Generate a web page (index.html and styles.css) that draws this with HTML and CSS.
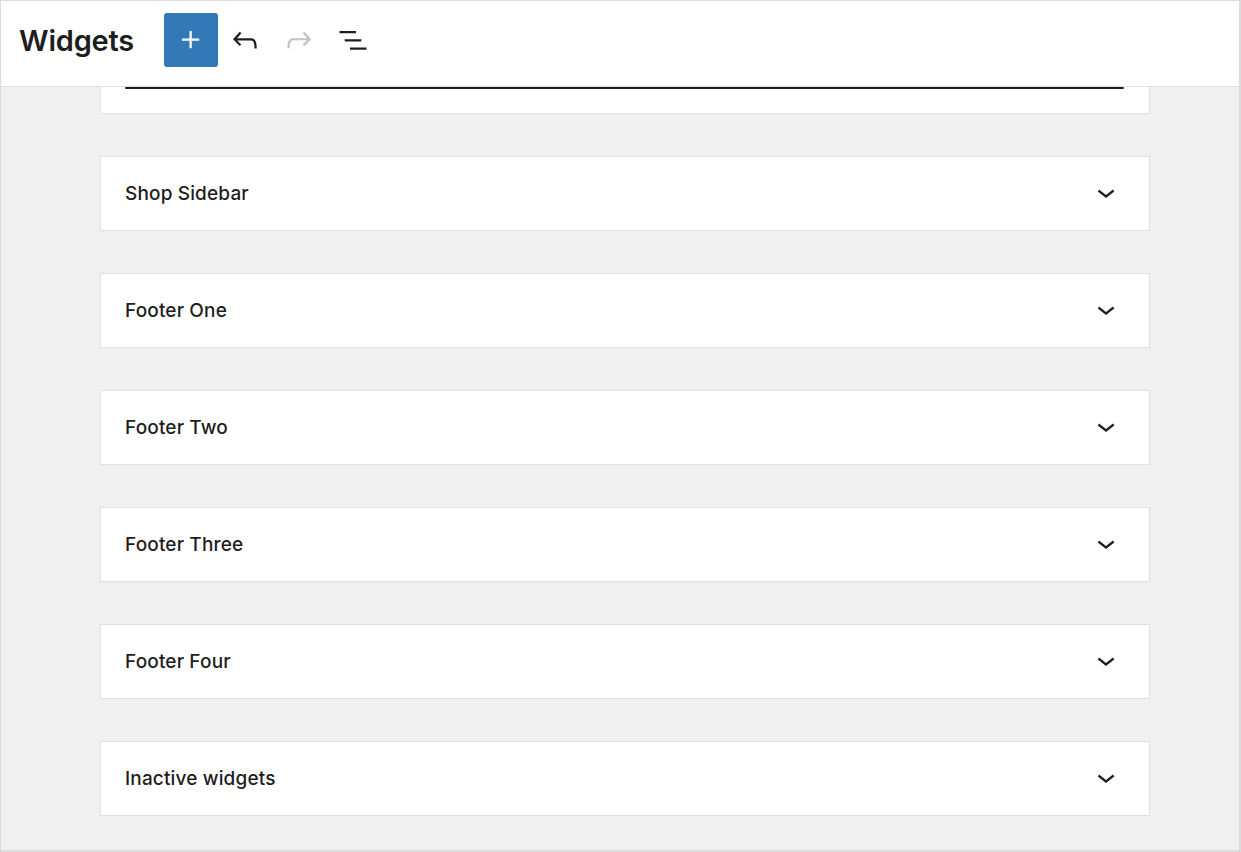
FILE: index.html
```html
<!DOCTYPE html>
<html lang="en">
<head>
<meta charset="utf-8">
<title>Widgets</title>
<link rel="stylesheet" href="styles.css">
</head>
<body>
<div class="frame">
  <header class="header">
    <h1 class="title">Widgets</h1>
    <div class="toolbar">
      <button class="tool tool-add" aria-label="Add block">
        <svg viewBox="0 0 24 24" width="36" height="36"><path d="M11 12.5V17.5H12.5V12.5H17.5V11H12.5V6H11V11H6V12.5H11Z"/></svg>
      </button>
      <button class="tool" aria-label="Undo">
        <svg viewBox="0 0 24 24" width="36" height="36"><path d="M18.3 11.7c-.6-.6-1.4-.9-2.3-.9H6.7l2.9-3.3-1.1-1-4.5 5L8.5 16l1-1-2.7-2.7H16c.5 0 .9.2 1.3.5 1 1 1 3.4 1 4.5v.3h1.5v-.2c0-1.5 0-4.3-1.5-5.7z"/></svg>
      </button>
      <button class="tool tool-disabled" aria-label="Redo">
        <svg viewBox="0 0 24 24" width="36" height="36"><path d="M15.6 6.5l-1.1 1 2.9 3.3H8c-.9 0-1.7.3-2.3.9-1.4 1.5-1.4 4.2-1.4 5.6v.2h1.5v-.3c0-1.1 0-3.5 1-4.5.3-.3.7-.5 1.3-.5h9.2L14.5 15l1.1 1.1 4.6-4.6-4.6-5z"/></svg>
      </button>
      <button class="tool" aria-label="List view">
        <svg viewBox="0 0 24 24" width="36" height="36"><path d="M3 6h11v1.5H3V6Zm3.5 5.5h11V13h-11v-1.5ZM21 17H10v1.5h11V17Z"/></svg>
      </button>
    </div>
  </header>
  <main class="main">
    <div class="area area-partial">
      <div class="partial-line"></div>
    </div>
    <div class="area"><span class="area-title">Shop Sidebar</span><svg class="chev" viewBox="0 0 24 24" width="36" height="36"><path d="M17.5 11.6L12 16l-5.5-4.4.9-1.2L12 14l4.6-3.6 1 1.2z"/></svg></div>
    <div class="area"><span class="area-title">Footer One</span><svg class="chev" viewBox="0 0 24 24" width="36" height="36"><path d="M17.5 11.6L12 16l-5.5-4.4.9-1.2L12 14l4.6-3.6 1 1.2z"/></svg></div>
    <div class="area"><span class="area-title">Footer Two</span><svg class="chev" viewBox="0 0 24 24" width="36" height="36"><path d="M17.5 11.6L12 16l-5.5-4.4.9-1.2L12 14l4.6-3.6 1 1.2z"/></svg></div>
    <div class="area"><span class="area-title">Footer Three</span><svg class="chev" viewBox="0 0 24 24" width="36" height="36"><path d="M17.5 11.6L12 16l-5.5-4.4.9-1.2L12 14l4.6-3.6 1 1.2z"/></svg></div>
    <div class="area"><span class="area-title">Footer Four</span><svg class="chev" viewBox="0 0 24 24" width="36" height="36"><path d="M17.5 11.6L12 16l-5.5-4.4.9-1.2L12 14l4.6-3.6 1 1.2z"/></svg></div>
    <div class="area"><span class="area-title">Inactive widgets</span><svg class="chev" viewBox="0 0 24 24" width="36" height="36"><path d="M17.5 11.6L12 16l-5.5-4.4.9-1.2L12 14l4.6-3.6 1 1.2z"/></svg></div>
  </main>
</div>
</body>
</html>
```

FILE: styles.css
```css
* { box-sizing: border-box; }
html, body { margin: 0; padding: 0; }
body {
  font-family: Inter, "Noto Sans", "Liberation Sans", sans-serif;
  color: #1e1e1e;
  background: #ffffff;
}
.frame {
  width: 1241px;
  height: 852px;
  border: 1px solid #dcdcdc;
  border-right-width: 2px;
  border-bottom-width: 2px;
  display: flex;
  flex-direction: column;
  overflow: hidden;
}
.header {
  height: 86px;
  flex: 0 0 86px;
  background: #fff;
  border-bottom: 1px solid #e0e0e0;
  display: flex;
  align-items: flex-start;
  padding: 12px 0 0 18px;
}
.title {
  margin: 13px 30px 0 0;
  font-size: 29px;
  font-weight: 600;
  letter-spacing: -0.2px;
  line-height: 1;
}
.toolbar {
  display: flex;
  align-items: center;
}
.tool {
  width: 54px;
  height: 54px;
  padding: 0;
  border: 0;
  background: transparent;
  display: flex;
  align-items: center;
  justify-content: center;
  fill: #1e1e1e;
}
.tool svg { display: block; }
.tool-add {
  background: #3379b7;
  border-radius: 3px;
  fill: #fff;
}
.tool-disabled { fill: #c4c4c4; }
.main {
  flex: 1;
  background: #f0f0f0;
  padding-left: 99px;
  display: flex;
  flex-direction: column;
  gap: 42px;
}
.area {
  width: 1050px;
  height: 75px;
  flex: 0 0 75px;
  background: #fff;
  border: 1px solid #e0e0e0;
  display: flex;
  align-items: center;
  justify-content: space-between;
  padding: 0 25px 0 24px;
}
.area-partial {
  height: 27px;
  flex: 0 0 27px;
  border-top: 0;
  align-items: flex-start;
  padding: 0 25px 0 24px;
}
.partial-line {
  width: 100%;
  height: 2px;
  background: #1e1e1e;
  border-radius: 1px;
}
.area-title {
  font-size: 19px;
  font-weight: 500;
  letter-spacing: 0.15px;
}
.chev {
  fill: #1e1e1e;
  display: block;
  margin-top: -3px;
}
```
